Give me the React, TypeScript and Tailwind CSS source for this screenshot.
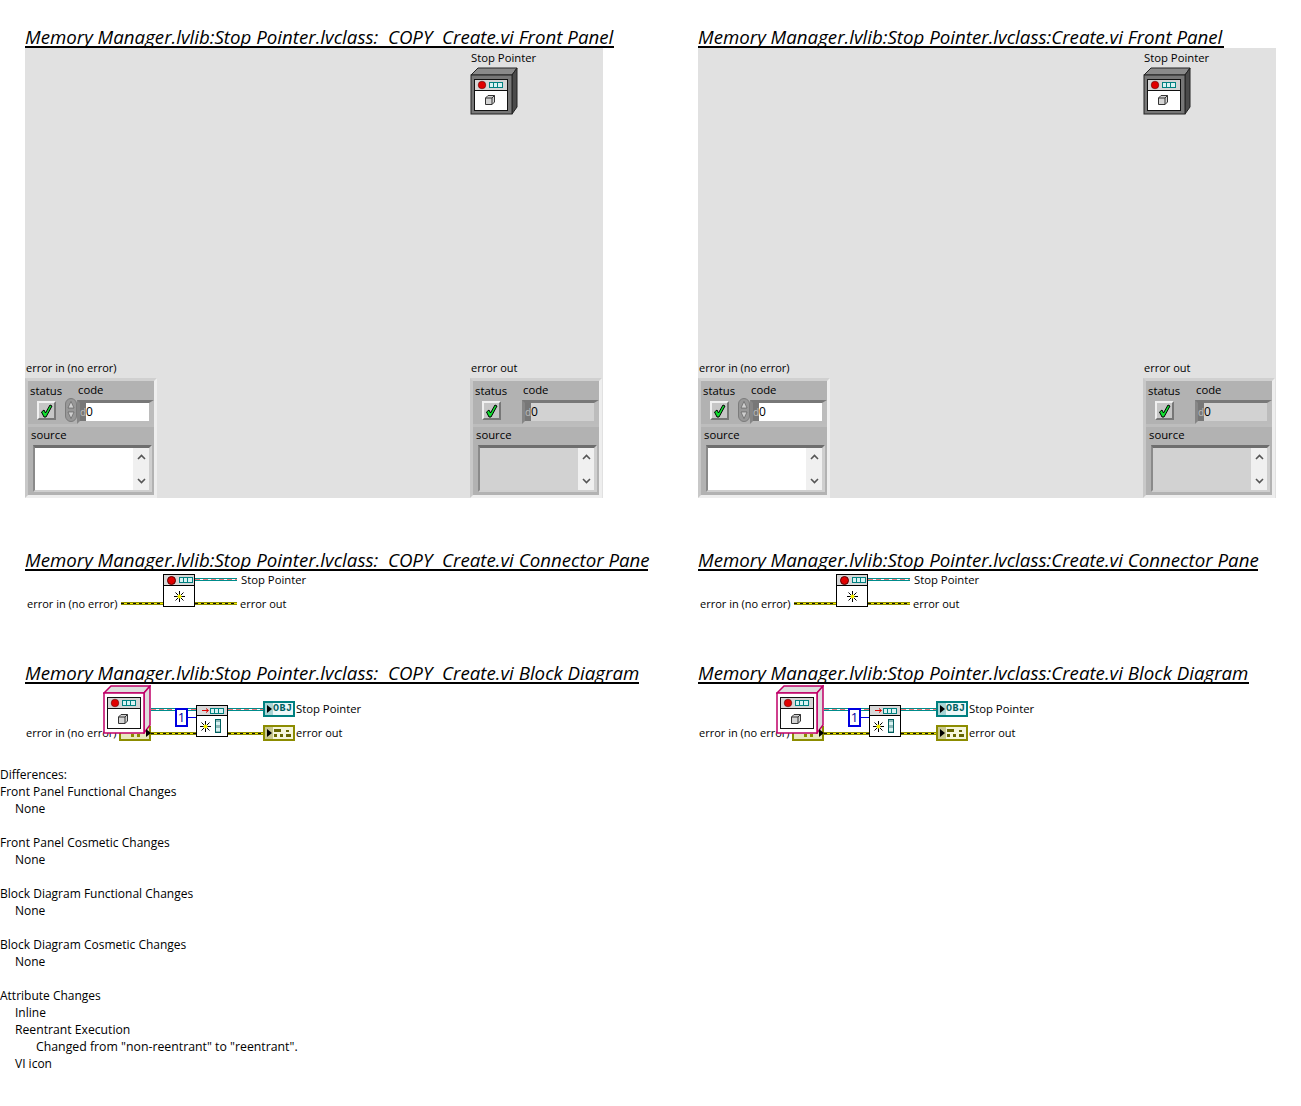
import React from 'react';

const TEAL = '#008080';

const ViHead = () => (
  <>
    <rect x="5" y="13" width="32" height="10" fill="#d6d6d6" />
    <circle cx="12" cy="18" r="3.8" fill="#e00000" stroke="#400" strokeWidth="0.5" />
    <rect x="19.5" y="15.5" width="13" height="5" fill="#d8f2f2" stroke={TEAL} />
    <path d="M23.5 15.5 V20.5 M27.5 15.5 V20.5" stroke={TEAL} />
  </>
);

const Cube = ({ y }: { y: number }) => (
  <g transform={`translate(15 ${y})`}>
    <path d="M0.5 3 L3 0.5 H9.5 V7 L7 9.5 H0.5 Z" fill="#d4d4d4" stroke="#333" />
    <path d="M0.5 3 H7 V9.5 M7 3 L9.5 0.5" fill="none" stroke="#333" />
  </g>
);

const PanelIcon = () => (
  <svg width="48" height="48" viewBox="0 0 48 48" className="block">
    <path d="M1 8 L8 1 H47 L42 8 Z" fill="#8a8a8a" stroke="#222" />
    <path d="M42 8 L47 1 V40 L42 47 Z" fill="#4a4a4a" stroke="#222" />
    <rect x="1" y="8" width="41" height="39" fill="#777" stroke="#222" />
    <rect x="4.5" y="12.5" width="33" height="31" fill="#fff" stroke="#111" />
    <ViHead />
    <line x1="5" y1="23.5" x2="37" y2="23.5" stroke="#111" />
    <Cube y={28} />
  </svg>
);

const Check = () => (
  <span className="flex h-[19px] w-[19px] items-center justify-center border-2 border-t-[#f0f0f0] border-l-[#f0f0f0] border-r-[#777] border-b-[#777] bg-[#c6c6c6]">
    <svg width="13" height="14" viewBox="0 0 13 14">
      <path d="M1.5 8 L4 6 L5.5 9 L10 1 L12 2 L6 13 H4 Z" fill="#10e030" stroke="#000" strokeWidth="1" />
    </svg>
  </span>
);

const Spinner = () => (
  <svg width="12" height="24" viewBox="0 0 12 24" className="block">
    <rect x="0.5" y="0.5" width="11" height="23" rx="5.5" fill="#989898" stroke="#7c7c7c" />
    <path d="M6 3.5 L3 10 H9 Z" fill="#cfcfcf" stroke="#555" strokeWidth="0.6" />
    <path d="M6 20.5 L3 14 H9 Z" fill="#cfcfcf" stroke="#555" strokeWidth="0.6" />
  </svg>
);

const Chevron = ({ up }: { up?: boolean }) => (
  <svg width="9" height="6" viewBox="0 0 9 6" className="block">
    <path d={up ? 'M1 5 L4.5 1.5 L8 5' : 'M1 1 L4.5 4.5 L8 1'} fill="none" stroke="#555" strokeWidth="1.6" />
  </svg>
);

// the error in / error out cluster on the front panel
const ErrorCluster = ({ label, control }: { label: string; control?: boolean }) => {
  const field = control ? 'bg-white' : 'bg-[#d2d2d2]';
  return (
    <div className="w-[133px] text-[11.3px]">
      <div className="h-[21px] pl-px pt-[2px] text-[11px] leading-[17px]">{label}</div>
      <div className="flex h-[120px] w-[132px] flex-col border-[3px] border-t-[#d0d0d0] border-l-[#c8c8c8] border-r-[#eeeeee] border-b-[#eeeeee] bg-[#b2b2b2]">
        <div className="flex h-[43px]">
          <div className="w-[37px]">
            <div className="h-[18px] pl-[2px] pt-px leading-[17px]">status</div>
            <div className="ml-[9px] mt-[2px]">
              <Check />
            </div>
          </div>
          <div className="w-[12px] pt-[17px]">{control && <Spinner />}</div>
          <div className="w-[77px]">
            <div className="h-[19px] pl-px leading-[17px]">code</div>
            <div className="flex h-[24px] border-b-[3px] border-l-[3px] border-r-[5px] border-t-[3px] border-b-[#bcbcbc] border-l-[#868686] border-r-[#bcbcbc] border-t-[#787878]">
              <span className="w-[6px] bg-[#777] text-center text-[10px] leading-[18px] text-[#bbb]">d</span>
              <span className={`flex-1 text-[12px] leading-[18px] ${field}`}>0</span>
            </div>
          </div>
        </div>
        <div className="h-[3px] bg-[#bdbdbd]" />
        <div className="h-[18px] pl-[3px] leading-[15px]">source</div>
        <div className={`ml-[5px] flex h-[47px] w-[119px] justify-end border-b-2 border-l-2 border-r-[3px] border-t-[3px] border-b-[#cfcfcf] border-l-[#8a8a8a] border-r-[#cfcfcf] border-t-[#6e6e6e] ${field}`}>
          <div className="flex w-[16px] flex-col items-center justify-between bg-[#f0f0f0] py-[6px]">
            <Chevron up />
            <Chevron />
          </div>
        </div>
      </div>
    </div>
  );
};

const FrontPanel = () => (
  <div className="flex h-[450px] w-[578px] flex-col justify-between bg-[#e1e1e1]">
    <div className="pl-[445px] text-[11.3px]">
      <div className="h-[19px] pl-px pt-px leading-[17px]">Stop Pointer</div>
      <PanelIcon />
    </div>
    <div className="flex gap-[312px]">
      <ErrorCluster label="error in (no error)" control />
      <ErrorCluster label="error out" />
    </div>
  </div>
);

const Wire = ({ kind, className }: { kind: 'object' | 'error'; className: string }) =>
  kind === 'object' ? (
    <div className={`h-[3px] border-y border-[#008c8c] bg-[repeating-linear-gradient(90deg,#e87878_0_5px,#ffffff_5px_8px)] ${className}`} />
  ) : (
    <div className={`h-[3px] border-y border-[#8c8c00] bg-[repeating-linear-gradient(90deg,#111_0_3px,#f4ec00_3px_6px)] ${className}`} />
  );

const Sun = () => (
  <svg width="11" height="11" viewBox="0 0 11 11">
    <path d="M5.5 0 V11 M0 5.5 H11 M1.5 1.5 L9.5 9.5 M9.5 1.5 L1.5 9.5" stroke="#000" strokeWidth="1" />
    <circle cx="5.5" cy="5.5" r="2" fill="#f5f000" />
  </svg>
);

const Cells = () => (
  <span className="flex h-[6px] w-[14px] border border-[#008080] bg-[#d8f2f2]">
    <span className="w-[4px] border-r border-[#008080]" />
    <span className="w-[4px] border-r border-[#008080]" />
  </span>
);

const ConnectorPane = () => (
  <div className="relative h-[85px] text-[11px]">
    <div className="absolute left-[138px] top-[3px] h-[33px] w-[32px] border border-black bg-white">
      <div className="flex h-[11px] items-center gap-[3px] border-b border-black bg-[#d8d8d8] pl-[3px]">
        <span className="h-[9px] w-[9px] rounded-full border border-[#500] bg-[#e00000]" />
        <Cells />
      </div>
      <div className="flex h-[20px] items-center justify-center">
        <Sun />
      </div>
    </div>
    <Wire kind="object" className="absolute left-[170px] top-[7px] w-[42px]" />
    <Wire kind="error" className="absolute left-[96px] top-[31px] w-[42px]" />
    <Wire kind="error" className="absolute left-[170px] top-[31px] w-[42px]" />
    <span className="absolute left-[216px] top-0 text-[11.3px] leading-[17px]">Stop Pointer</span>
    <span className="absolute left-[2px] top-[24px] leading-[17px]">error in (no error)</span>
    <span className="absolute left-[215px] top-[24px] leading-[17px]">error out</span>
  </div>
);

const TerminalArrow = () => (
  <svg width="5" height="8" viewBox="0 0 5 8" className="absolute left-[2px] top-[2px]">
    <path d="M0 0 L5 4 L0 8 Z" fill="#000" />
  </svg>
);

const BlockDiagram = () => (
  <div className="relative h-[82px] text-[11px]">
    <span className="absolute left-px top-[40px] leading-[17px]">error in (no error)</span>

    {/* error in terminal, mostly hidden behind the class constant */}
    <div className="absolute left-[94px] top-[42px] h-[15px] w-[32px] border-2 border-[#8c8c00] bg-[#e8e8c0]">
      <div className="mt-[6px] flex justify-center gap-[3px]">
        <span className="h-[3px] w-[3px] bg-[#8c8c00]" />
        <span className="h-[3px] w-[3px] bg-[#8c8c00]" />
      </div>
    </div>

    <Wire kind="object" className="absolute left-[126px] top-[24px] w-[45px]" />
    <Wire kind="error" className="absolute left-[126px] top-[48px] w-[45px]" />

    {/* class constant */}
    <svg width="48" height="49" viewBox="0 0 48 49" className="absolute left-[78px] top-px">
      <path d="M1 8 L8 1 H47 V40 L41 48 H1 Z" fill="#fff" />
      <path d="M1 8 L8 1 H47 L41 8 Z" fill="#dedede" stroke="#c00068" strokeWidth="1.5" />
      <path d="M41 8 L47 1 V40 L41 48 Z" fill="#dedede" stroke="#c00068" strokeWidth="1.5" />
      <rect x="1" y="8" width="40" height="40" fill="#fff" stroke="#c00068" strokeWidth="1.5" />
      <rect x="4.5" y="12.5" width="33" height="31" fill="#fff" stroke="#111" />
      <ViHead />
      <line x1="5" y1="23.5" x2="37" y2="23.5" stroke="#111" />
      <Cube y={29} />
    </svg>
    <svg width="6" height="8" viewBox="0 0 6 8" className="absolute left-[121px] top-[45px]">
      <path d="M0 0 L5 4 L0 8 Z" fill="#000" />
    </svg>

    {/* numeric constant */}
    <div className="absolute left-[150px] top-[24px] flex h-[19px] w-[13px] items-center justify-center border-2 border-[#0000e0] bg-white text-[13px] leading-none text-[#0000a0]">
      1
    </div>
    <div className="absolute left-[162px] top-[33px] h-px w-[9px] bg-[#0000e0]" />

    {/* memory manager subVI */}
    <div className="absolute left-[171px] top-[21px] h-[32px] w-[32px] border border-black bg-white">
      <div className="flex h-[10px] items-center justify-end gap-px border-b border-black bg-[#d8d8d8] pr-[3px]">
        <svg width="7" height="5" viewBox="0 0 7 5">
          <path d="M0 2.5 H6 M4 0.5 L6.5 2.5 L4 4.5" fill="none" stroke="#e00000" />
        </svg>
        <Cells />
      </div>
      <div className="flex h-[20px] items-center justify-between pl-[3px] pr-[6px]">
        <Sun />
        <span className="flex h-[14px] w-[6px] flex-col justify-around border border-[#006060] bg-[#8fb8b8]">
          <span className="h-[3px] bg-[#d8f2f2]" />
          <span className="h-[3px] bg-[#d8f2f2]" />
        </span>
      </div>
    </div>

    <Wire kind="object" className="absolute left-[203px] top-[24px] w-[36px]" />
    <Wire kind="error" className="absolute left-[203px] top-[48px] w-[36px]" />

    <div className="absolute left-[238px] top-[17px] h-[16px] w-[32px] border-2 border-[#008080] bg-[#eef8f8]">
      <span className="absolute inset-y-0 left-0 w-[8px] bg-[#a8d4d4]" />
      <TerminalArrow />
      <span className="absolute left-[8px] top-0 font-['Liberation_Mono',monospace] text-[10px] font-bold leading-[12px] tracking-[0.5px] text-[#006060]">
        OBJ
      </span>
    </div>
    <div className="absolute left-[238px] top-[41px] h-[16px] w-[32px] border-2 border-[#8c8c00] bg-[#f6f6dc]">
      <span className="absolute inset-y-0 left-0 w-[8px] bg-[#c8c890]" />
      <TerminalArrow />
      <svg width="18" height="10" viewBox="0 0 18 10" className="absolute left-[9px] top-px">
        <path d="M0 1 H7 V4 H0 Z M12 2 H15 V4 H12 Z M0 6 H3 V9 H0 Z M6 6 H9 V9 H6 Z M12 6 H17 V9 H12 Z" fill="#666600" />
      </svg>
    </div>
    <span className="absolute left-[271px] top-[16px] text-[11.3px] leading-[17px]">Stop Pointer</span>
    <span className="absolute left-[271px] top-[40px] leading-[17px]">error out</span>
  </div>
);

const Title = ({ children, className }: { children: string; className: string }) => (
  <h2 className={`h-[28px] whitespace-pre border-b-2 border-black pt-[5px] text-[18.7px] italic leading-[24px] ${className}`}>
    {children}
  </h2>
);

const VersionColumn = ({ name, widths }: { name: string; widths: [string, string, string] }) => (
  <div>
    <Title className={widths[0]}>{`Memory Manager.lvlib:Stop Pointer.lvclass:${name}.vi Front Panel`}</Title>
    <FrontPanel />
    <Title className={`mt-[45px] ${widths[1]}`}>{`Memory Manager.lvlib:Stop Pointer.lvclass:${name}.vi Connector Pane`}</Title>
    <ConnectorPane />
    <Title className={widths[2]}>{`Memory Manager.lvlib:Stop Pointer.lvclass:${name}.vi Block Diagram`}</Title>
    <BlockDiagram />
  </div>
);

const DIFFS = [
  { text: 'Differences:', indent: 'pl-0' },
  { text: 'Front Panel Functional Changes', indent: 'pl-0' },
  { text: 'None', indent: 'pl-[15px]' },
  { text: '', indent: 'pl-0' },
  { text: 'Front Panel Cosmetic Changes', indent: 'pl-0' },
  { text: 'None', indent: 'pl-[15px]' },
  { text: '', indent: 'pl-0' },
  { text: 'Block Diagram Functional Changes', indent: 'pl-0' },
  { text: 'None', indent: 'pl-[15px]' },
  { text: '', indent: 'pl-0' },
  { text: 'Block Diagram Cosmetic Changes', indent: 'pl-0' },
  { text: 'None', indent: 'pl-[15px]' },
  { text: '', indent: 'pl-0' },
  { text: 'Attribute Changes', indent: 'pl-0' },
  { text: 'Inline', indent: 'pl-[15px]' },
  { text: 'Reentrant Execution', indent: 'pl-[15px] text-[12.2px]' },
  { text: 'Changed from "non-reentrant" to "reentrant".', indent: 'pl-[36px] text-[12.3px]' },
  { text: 'VI icon', indent: 'pl-[15px]' },
];

export default function App() {
  return (
    <div className="h-[1106px] w-[1301px] overflow-hidden bg-white font-['Open_Sans',sans-serif] text-[12px] text-black">
      <div className="grid grid-cols-[673px_578px] pl-[25px] pt-[20px]">
        <VersionColumn name="  COPY  Create" widths={['w-[589px]', 'w-[623px]', 'w-[614px]']} />
        <VersionColumn name="Create" widths={['w-[526px]', 'w-[560px]', 'w-[551px]']} />
      </div>
      <div>
        {DIFFS.map((line, i) => (
          <div key={i} className={`h-[17px] leading-[17px] ${line.indent}`}>
            {line.text}
          </div>
        ))}
      </div>
    </div>
  );
}
